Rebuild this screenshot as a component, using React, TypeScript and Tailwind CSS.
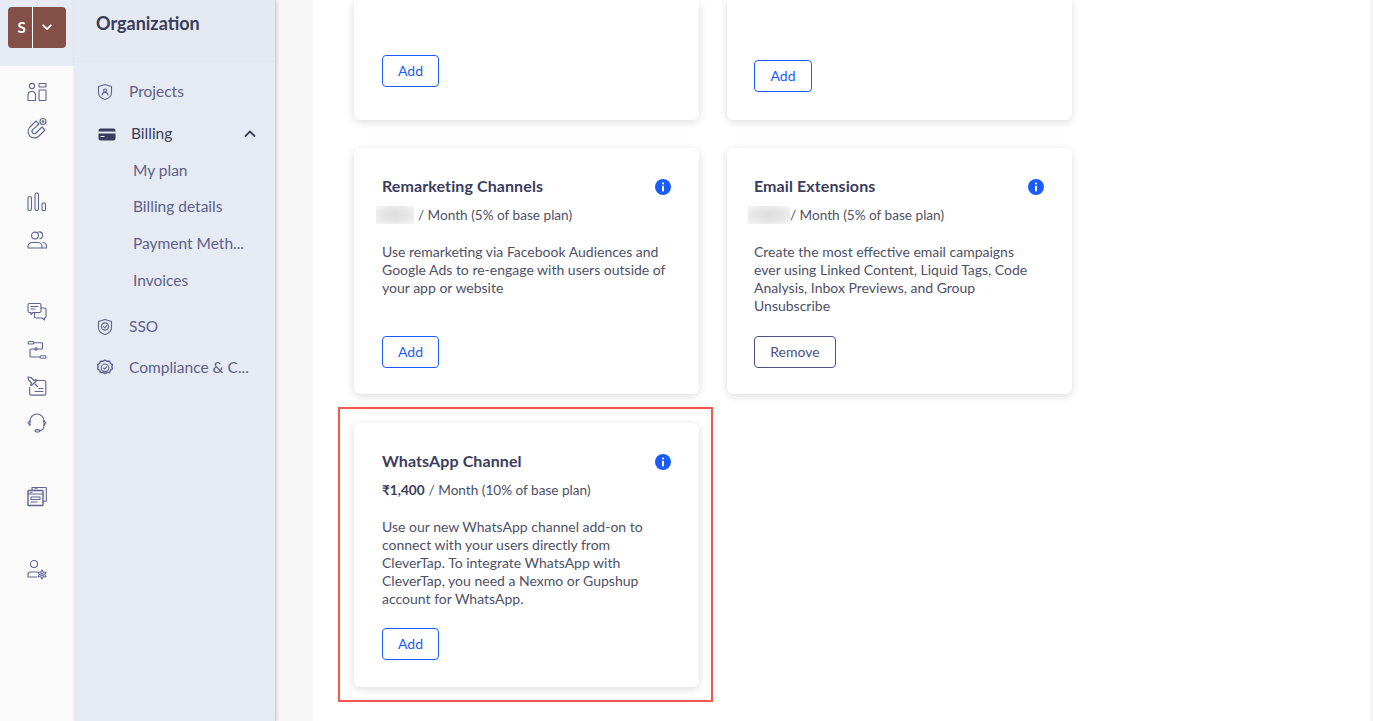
import { ReactNode } from "react";

const ICON = "#5f6490";

function Svg({ children, size = 22 }: { children: ReactNode; size?: number }) {
  return (
    <svg width={size} height={size} viewBox="0 0 22 22" fill="none" stroke={ICON} strokeWidth="1.100" strokeLinecap="round" strokeLinejoin="round">
      {children}
    </svg>
  );
}

// left rail icons, traced by eye from the screenshot
const railIcons: Record<string, ReactNode> = {
  dashboard: (
    <>
      <circle cx="6" cy="5" r="2.600" />
      <path d="M2 19.500v-6a3.500 3.500 0 0 1 3.500-3h1a3.500 3.500 0 0 1 3 3v6z" />
      <rect x="13" y="2.500" width="7" height="3.500" rx=".6" />
      <rect x="13" y="9" width="7" height="10.500" rx=".6" />
    </>
  ),
  magnet: (
    <>
      <path d="M10 4 3.500 10.500a6.400 6.400 0 0 0 9 9L19 13l-3-3-6 6a2.300 2.300 0 0 1-3.300-3.300L13 7z" />
      <circle cx="17" cy="4.500" r="3" />
      <circle cx="17" cy="4.500" r=".8" />
    </>
  ),
  bars: (
    <>
      <rect x="2" y="5.500" width="3.500" height="14" rx="1.700" />
      <rect x="9" y="2" width="3.500" height="17.500" rx="1.700" />
      <rect x="16" y="12" width="3.500" height="7.500" rx="1" />
    </>
  ),
  users: (
    <>
      <circle cx="9" cy="6.500" r="3.400" />
      <path d="M2 19v-1.500a4 4 0 0 1 4-4h6a4 4 0 0 1 4 4V19z" />
      <path d="M12.500 3a3.400 3.400 0 0 1 1.500 6.800M17 13.500a4 4 0 0 1 3.500 4V19h-4" />
    </>
  ),
  chat: (
    <>
      <path d="M3.500 2.500h10a1.500 1.500 0 0 1 1.500 1.500v6a1.500 1.500 0 0 1-1.500 1.500H7l-2 2v-2H3.500A1.500 1.500 0 0 1 2 10V4a1.500 1.500 0 0 1 1.500-1.500z" />
      <path d="M15 7h3.500A1.500 1.500 0 0 1 20 8.500v7a1.500 1.500 0 0 1-1.500 1.500v2l-2.500-2h-6a1.500 1.500 0 0 1-1.500-1.500V11.500" />
      <path d="M5 5.500h7M5 8h4" />
    </>
  ),
  flow: (
    <>
      <rect x="2" y="2.500" width="6" height="2.500" rx="1.200" />
      <path d="M8 3.700h7.500a1 1 0 0 1 1 1V9a1 1 0 0 1-1 1H5a1 1 0 0 0-1 1v6a1 1 0 0 0 1 1h9" />
      <circle cx="10" cy="10" r="1.200" />
      <rect x="14" y="16.700" width="6" height="2.600" rx="1.200" />
    </>
  ),
  pin: (
    <>
      <path d="M10 5.500h8.500a1.300 1.300 0 0 1 1.300 1.300v12a1.300 1.300 0 0 1-1.300 1.300H5a1.300 1.300 0 0 1-1.300-1.300v-6.500" />
      <path d="m2 2 3 .5 3 3 2-1 .5 1-5 5-1-.5 1-2-3-3zM9 9l2.500 2.500" />
      <path d="M9 16.500h8M13 13.500h4" />
    </>
  ),
  headset: (
    <>
      <path d="M4 9.500V9a7 7 0 0 1 14 0v.5" />
      <path d="M4 8.500 2 11l2 2.500zM18 8.500l2 2.500-2 2.500z" />
      <path d="M18 13.500c0 3.500-2 5-4.500 5" />
      <ellipse cx="11.500" cy="18.800" rx="2.500" ry="1.200" />
    </>
  ),
  windows: (
    <>
      <path d="M6 5V2.500h13.500a.8.800 0 0 1 .8.800V15.500a.8.800 0 0 1-.8.800H17" />
      <rect x="2" y="5.500" width="15" height="15" rx=".8" strokeWidth="1.400" />
      <path d="M2 9h15M5 12h9v2.500H5zM5 17h6M4 7.200h2M9 3.800h2" />
    </>
  ),
  userGear: (
    <>
      <circle cx="8" cy="6" r="3.500" />
      <path d="M11 14H4.500A2.500 2.500 0 0 0 2 16.500V19h8.500" />
      <circle cx="16" cy="16.500" r="1.300" />
      <path d="m16 12 1.300 2.300H20l-1.300 2.200 1.300 2.200h-2.700L16 21l-1.300-2.300H12l1.300-2.200-1.300-2.200h2.700z" />
    </>
  ),
};

function RailIcon({ name, className }: { name: string; className: string }) {
  return <div className={`flex h-[22px] justify-center ${className}`}>
    <Svg size={22}>{railIcons[name]}</Svg>
  </div>;
}

function Rail() {
  return (
    <aside className="flex h-full w-[74px] shrink-0 flex-col bg-[#fafafa]">
      <div className="flex h-[66px] shrink-0 items-start bg-[#e5eaf3] pl-[8px] pt-[7px]">
        <div className="flex h-[41px] w-[58px] rounded-[4px] bg-[#834f47] text-white">
          <div className="flex w-[25px] items-center justify-center border-r border-white pl-[3px] text-[15px] font-bold">S</div>
          <div className="flex flex-1 items-center justify-center pr-[6px]">
            <svg width="10" height="7" viewBox="0 0 10 7" fill="none" stroke="white" strokeWidth="1.800" strokeLinecap="round" strokeLinejoin="round"><path d="m1.200 1.300 3.800 3.800 3.800-3.800" /></svg>
          </div>
        </div>
      </div>
      <RailIcon name="dashboard" className="mt-[15px]" />
      <RailIcon name="magnet" className="mt-[14px]" />
      <RailIcon name="bars" className="mt-[52px]" />
      <RailIcon name="users" className="mt-[16px]" />
      <RailIcon name="chat" className="mt-[50px]" />
      <RailIcon name="flow" className="mt-[16px]" />
      <RailIcon name="pin" className="mt-[14px]" />
      <RailIcon name="headset" className="mt-[15px]" />
      <RailIcon name="windows" className="mt-[51px]" />
      <RailIcon name="userGear" className="mt-[51px]" />
    </aside>
  );
}

function NavIcon({ children }: { children: ReactNode }) {
  return <span className="flex w-[18px] shrink-0 justify-center"><svg width="18" height="18" viewBox="0 0 18 18" fill="none" stroke={ICON} strokeWidth="1.100" strokeLinecap="round" strokeLinejoin="round">{children}</svg></span>;
}

function NavRow({ icon, label, className }: { icon: ReactNode; label: string; className: string }) {
  return (
    <div className={`flex h-[22px] items-center pl-[22px] text-[15.500px] text-[#5d618a] ${className}`}>
      <NavIcon>{icon}</NavIcon>
      <span className="ml-[15px] whitespace-nowrap">{label}</span>
    </div>
  );
}

function SubRow({ label, className }: { label: string; className: string }) {
  return <div className={`h-[22px] pl-[59px] text-[15.500px] leading-[22px] whitespace-nowrap text-[#5d618a] ${className}`}>{label}</div>;
}

function OrgNav() {
  return (
    <nav className="h-full w-[202px] shrink-0 border-r border-[#cfd3dc] bg-[#e6eaf2] shadow-[1px_0_3px_rgba(0,0,0,0.15)]">
      <div className="flex h-[61px] items-start bg-[#e5e9f2] pl-[22px] pt-[10px] text-[18px] font-bold text-[#3a3d5c] shadow-[0_1px_1px_rgba(0,0,0,0.02)]">Organization</div>
      <NavRow
        className="mt-[20px]"
        label="Projects"
        icon={<>
          <path d="M9 1.500 15.500 3.500v6c0 3.500-3 6-6.500 7-3.500-1-6.500-3.500-6.500-7v-6z" />
          <circle cx="9" cy="7.500" r="1.500" />
          <path d="M6 12c.3-1.800 1.500-2.600 3-2.600s2.700.8 3 2.600" />
        </>}
      />
      <div className="mt-[20px] flex h-[22px] items-center pl-[24px] pr-[19px] text-[15.500px] text-[#3a3d5c]">
        <svg width="18" height="13" viewBox="0 0 18 13" className="shrink-0">
          <path fill="#3a3d5c" fillRule="evenodd" d="M2.500 0.500h13a2 2 0 0 1 2 2v1H0.500v-1a2 2 0 0 1 2-2zM0.500 5.500h17v5a2 2 0 0 1-2 2h-13a2 2 0 0 1-2-2zM2.500 8v1h4V8z" />
        </svg>
        <span className="ml-[15px]">Billing</span>
        <svg className="ml-auto" width="12" height="8" viewBox="0 0 12 8" fill="none" stroke="#3a3d5c" strokeWidth="1.800" strokeLinecap="round" strokeLinejoin="round"><path d="m1.500 6 4.500-4.500 4.500 4.500" /></svg>
      </div>
      <SubRow className="mt-[14px]" label="My plan" />
      <SubRow className="mt-[14px]" label="Billing details" />
      <SubRow className="mt-[15px]" label="Payment Meth..." />
      <SubRow className="mt-[15px]" label="Invoices" />
      <NavRow
        className="mt-[25px]"
        label="SSO"
        icon={<>
          <path d="M9 1.500 15.500 3.500v6c0 3.500-3 6-6.500 7-3.500-1-6.500-3.500-6.500-7v-6z" />
          <circle cx="9" cy="8.500" r="3.600" />
          <path d="m7.500 8.700 1.200 1.100 2-2.200" />
        </>}
      />
      <NavRow
        className="mt-[19px]"
        label="Compliance & C..."
        icon={<>
          <path strokeWidth="1.400" d="M9 1l2 1.300 2.400-.2 1 2.200 2 1.300-.5 2.400.5 2-2 1.400-1 2.200-2.400-.2-2 1.300-2-1.300-2.400.2-1-2.200-2-1.400.5-2-.5-2.400 2-1.300 1-2.200 2.400.2z" />
          <circle cx="9" cy="8.800" r="3.800" />
          <path d="m7.500 9 1.200 1.100 2-2.200" />
        </>}
      />
    </nav>
  );
}

function InfoDot() {
  return (
    <svg width="16" height="16" viewBox="0 0 16 16" className="mt-[1px] shrink-0">
      <circle cx="8" cy="8" r="8" fill="#1a5cff" />
      <circle cx="8" cy="4.500" r="1.100" fill="white" />
      <rect x="7" y="6.800" width="2" height="5.500" fill="white" />
    </svg>
  );
}

function Button({ label, remove, className }: { label: string; remove?: boolean; className: string }) {
  return (
    <button className={`flex h-[32px] items-center justify-center rounded-[4px] border bg-white text-[14px] ${remove ? "w-[82px] border-[#4c5180] text-[#4c5180]" : "w-[57px] border-[#1a5cff] text-[#1a5cff]"} ${className}`}>
      {label}
    </button>
  );
}

function BlurredPrice({ className }: { className: string }) {
  return <span className={`h-[18px] bg-[radial-gradient(ellipse_at_center,#dcdcdc_0%,#e6e6e6_50%,#f6f6f6_100%)] ${className}`} />;
}

const cardClass = "rounded-[6px] bg-white shadow-[0_2px_8px_rgba(0,0,0,0.14)]";

function AddOnCard({ title, price, body, button, className }: { title: string; price: ReactNode; body: string[]; button: ReactNode; className: string }) {
  return (
    <section className={`${cardClass} flex w-[345px] flex-col pr-[28px] pt-[27px] ${className}`}>
      <div className="flex h-[22px] items-center justify-between">
        <h3 className="-mt-[1px] text-[16px] font-bold tracking-[0.1px] text-[#3a3d5c]">{title}</h3>
        <InfoDot />
      </div>
      <div className="mt-[9px] flex h-[18px] items-center text-[13.600px] whitespace-nowrap text-[#4e5068]">{price}</div>
      <div className="mt-[19px] text-[14px] leading-[18px] whitespace-nowrap text-[#4e5068]">
        {body.map((line) => <div key={line}>{line}</div>)}
      </div>
      {button}
    </section>
  );
}

export default function App() {
  return (
    <div className="flex h-[721px] w-[1373px] overflow-hidden bg-[#f6f6f6] font-['Lato','Liberation_Sans',sans-serif]">
      <Rail />
      <OrgNav />
      <main className="ml-[37px] h-full w-[1057px] overflow-hidden bg-white pl-[41px]">
        <div className="flex gap-[28px]">
          <div className={`${cardClass} h-[120px] w-[345px] rounded-t-none pl-[28px] pt-[55px]`}>
            <Button label="Add" className="pb-[1px]" />
          </div>
          <div className={`${cardClass} h-[120px] w-[345px] overflow-hidden rounded-t-none pl-[27px]`}>
            <div className="-mt-[16px] h-[18px] text-[14px] leading-[18px] text-[#4e5068]">y</div>
            <Button label="Add" className="mt-[58px] w-[58px] pb-[1px]" />
          </div>
        </div>
        <div className="mt-[28px] flex gap-[28px]">
          <AddOnCard
            className="h-[246px] pl-[28px]"
            title="Remarketing Channels"
            price={<><BlurredPrice className="-ml-[6px] mr-[4px] w-[38px]" />/ Month (5% of base plan)</>}
            body={["Use remarketing via Facebook Audiences and", "Google Ads to re-engage with users outside of", "your app or website"]}
            button={<Button label="Add" className="mt-[39px] pb-[2px]" />}
          />
          <AddOnCard
            className="h-[246px] pl-[27px]"
            title="Email Extensions"
            price={<><BlurredPrice className="-ml-[6px] w-[42px]" />/ Month (5% of base plan)</>}
            body={["Create the most effective email campaigns", "ever using Linked Content, Liquid Tags, Code", "Analysis, Inbox Previews, and Group", "Unsubscribe"]}
            button={<Button label="Remove" remove className="mt-[21px] pb-[2px]" />}
          />
        </div>
        <div className="relative mt-[29px] w-[345px]">
          <AddOnCard
            className="h-[264px] pl-[28px]"
            title="WhatsApp Channel"
            price={<><b className="mr-[4px] font-bold text-[#3a3d5c]">₹1,400</b>/ Month (10% of base plan)</>}
            body={["Use our new WhatsApp channel add-on to", "connect with your users directly from", "CleverTap. To integrate WhatsApp with", "CleverTap, you need a Nexmo or Gupshup", "account for WhatsApp."]}
            button={<Button label="Add" className="mt-[20px] pb-[2px]" />}
          />
          <div className="pointer-events-none absolute -bottom-[15px] -left-[16px] -right-[14px] -top-[16px] border-2 border-[#f4574f]" />
        </div>
      </main>
    </div>
  );
}
